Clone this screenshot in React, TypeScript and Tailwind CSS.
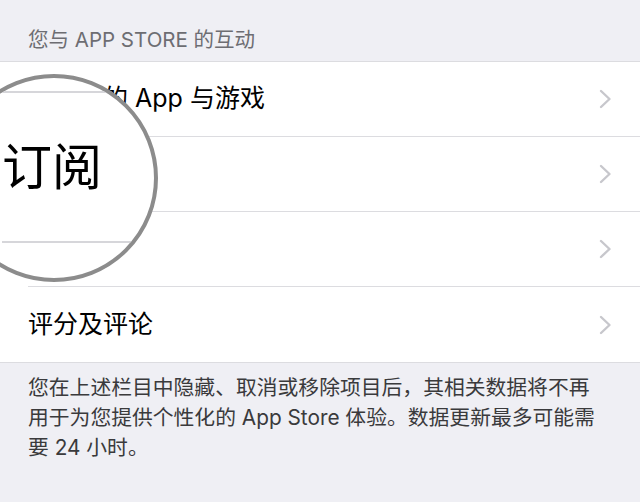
import React from 'react';

const rows = ['已购买的 App 与游戏', '订阅', '游戏', '评分及评论'];

const Chevron = () => (
  <svg width="13" height="20" viewBox="0 0 13 20" fill="none">
    <path d="M2 2l8.5 8L2 18" stroke="#c7c7cc" strokeWidth="2.4" strokeLinecap="round" strokeLinejoin="round" />
  </svg>
);

// loupe over the left edge, shows the "订阅" row at 2x
const Loupe = () => (
  <div className="absolute left-[-50px] top-[74px] w-[208px] h-[208px] rounded-full border-4 border-[#8c8c8c] overflow-hidden bg-white">
    <div className="pt-[13px] pl-[48px]">
      <div className="border-t-2 border-[#d6d6da] h-[152px] flex items-center border-b-2">
        <span className="text-[50px] leading-none text-black">订阅</span>
      </div>
    </div>
  </div>
);

export default function App() {
  return (
    <div className='relative w-[640px] h-[502px] overflow-hidden bg-[#efeff4] font-["Inter","Noto_Sans_CJK_SC",sans-serif]'>
      <div className="px-[28px] pt-[28px] pb-[9px] text-[20.5px] leading-[24px] text-[#6d6d72]">您与 APP STORE 的互动</div>
      <div className="bg-white border-y border-[#dcdce0]">
        {rows.map((label, i) => (
          <div key={label} className="pl-[28px]">
            <div
              className={`h-[75px] flex items-center justify-between pr-[28px] ${
                i < rows.length - 1 ? 'border-b border-[#dcdce0]' : ''
              }`}
            >
              <span className="text-[25px] text-black">{label}</span>
              <Chevron />
            </div>
          </div>
        ))}
      </div>
      <p className="px-[28px] pt-[10px] text-[20.8px] leading-[30px] text-[#3a3a3c]">
        您在上述栏目中隐藏、取消或移除项目后，其相关数据将不再
        <br />
        用于为您提供个性化的 App Store 体验。数据更新最多可能需
        <br />
        要 24 小时。
      </p>
      <Loupe />
    </div>
  );
}
